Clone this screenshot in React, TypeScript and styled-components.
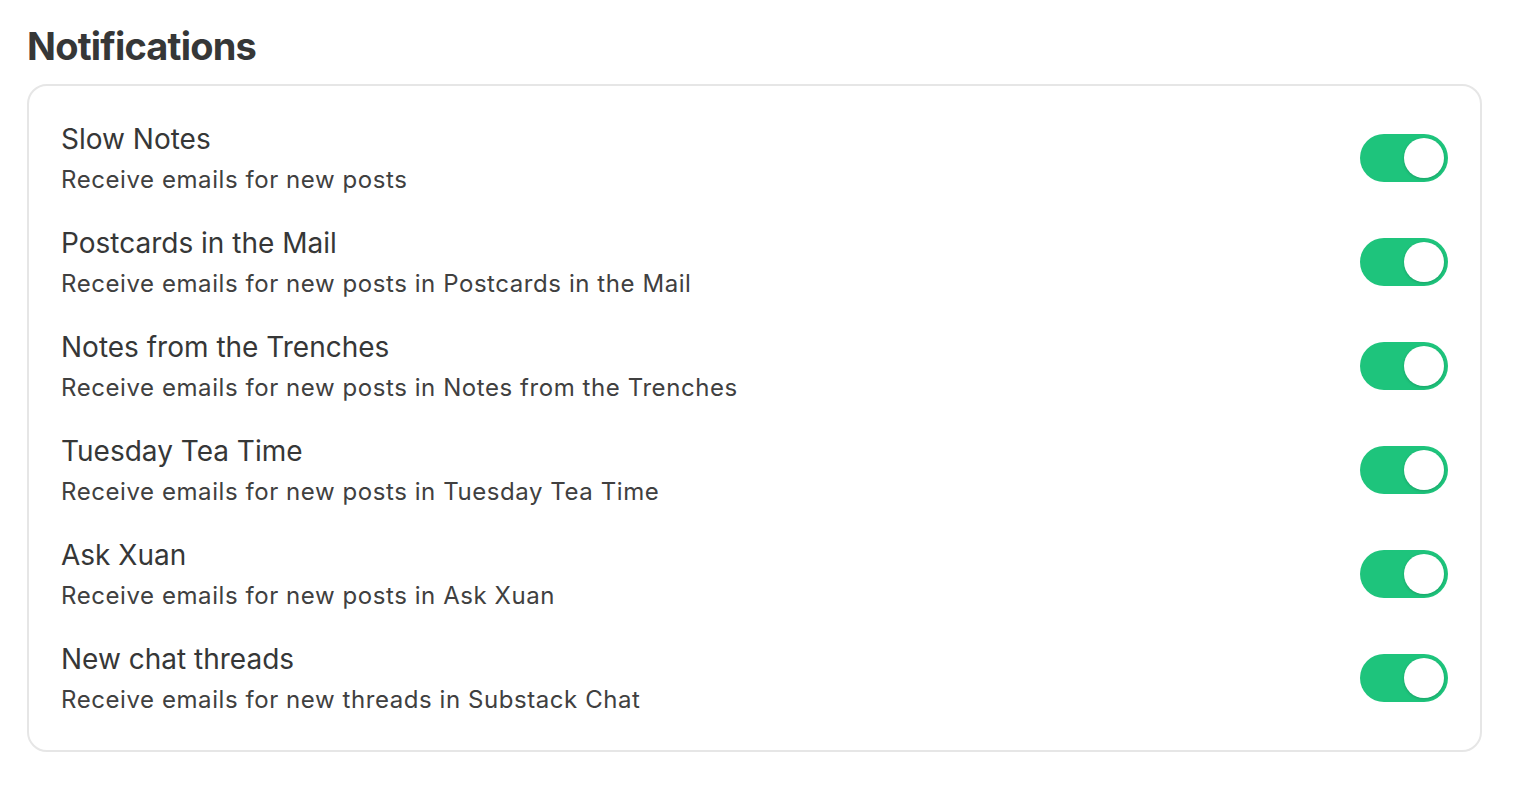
import React, { useState } from 'react';
import styled, { createGlobalStyle } from 'styled-components';

type NotificationItem = {
  title: string;
  description: string;
};

const items: NotificationItem[] = [
  { title: 'Slow Notes', description: 'Receive emails for new posts' },
  {
    title: 'Postcards in the Mail',
    description: 'Receive emails for new posts in Postcards in the Mail',
  },
  {
    title: 'Notes from the Trenches',
    description: 'Receive emails for new posts in Notes from the Trenches',
  },
  {
    title: 'Tuesday Tea Time',
    description: 'Receive emails for new posts in Tuesday Tea Time',
  },
  { title: 'Ask Xuan', description: 'Receive emails for new posts in Ask Xuan' },
  {
    title: 'New chat threads',
    description: 'Receive emails for new threads in Substack Chat',
  },
];

const GlobalStyle = createGlobalStyle`
  body {
    margin: 0;
    background: #ffffff;
    font-family: Inter, "Noto Sans", "Liberation Sans", sans-serif;
    -webkit-font-smoothing: antialiased;
  }
`;

const Page = styled.main`
  padding: 22px 44px 0 27px;
`;

const Heading = styled.h1`
  margin: 0 0 14px;
  font-size: 38px;
  line-height: 48px;
  font-weight: 700;
  letter-spacing: -0.8px;
  color: #363737;
`;

const Card = styled.section`
  border: 2px solid #e6e6e6;
  border-radius: 20px;
  padding: 35px 32px 35px;
  display: flex;
  flex-direction: column;
  gap: 30px;
`;

const Row = styled.div`
  display: flex;
  align-items: center;
  justify-content: space-between;
`;

const Text = styled.div`
  display: flex;
  flex-direction: column;
  gap: 7px;
`;

const Title = styled.div`
  font-size: 28px;
  line-height: 36px;
  color: #363737;
`;

const Description = styled.div`
  font-size: 24px;
  line-height: 31px;
  letter-spacing: 0.57px;
  color: #404040;
`;

const Switch = styled.button<{ $on: boolean }>`
  position: relative;
  width: 88px;
  height: 48px;
  padding: 0;
  border: none;
  border-radius: 24px;
  cursor: pointer;
  flex-shrink: 0;
  background: ${({ $on }) => ($on ? '#1ec47c' : '#d9d9d9')};
  transition: background 0.15s linear;

  &::after {
    content: '';
    position: absolute;
    top: 4px;
    left: ${({ $on }) => ($on ? '44px' : '4px')};
    width: 40px;
    height: 40px;
    border-radius: 50%;
    background: #ffffff;
    box-shadow: 0 1px 3px rgba(0, 0, 0, 0.18);
    transition: left 0.15s linear;
  }
`;

const NotificationRow = ({ title, description }: NotificationItem) => {
  const [isOn, setIsOn] = useState(true);

  return (
    <Row>
      <Text>
        <Title>{title}</Title>
        <Description>{description}</Description>
      </Text>
      <Switch
        type="button"
        role="switch"
        aria-checked={isOn}
        aria-label={title}
        $on={isOn}
        onClick={() => setIsOn(!isOn)}
      />
    </Row>
  );
};

const App = () => (
  <>
    <GlobalStyle />
    <Page>
      <Heading>Notifications</Heading>
      <Card>
        {items.map((item) => (
          <NotificationRow key={item.title} {...item} />
        ))}
      </Card>
    </Page>
  </>
);

export default App;
